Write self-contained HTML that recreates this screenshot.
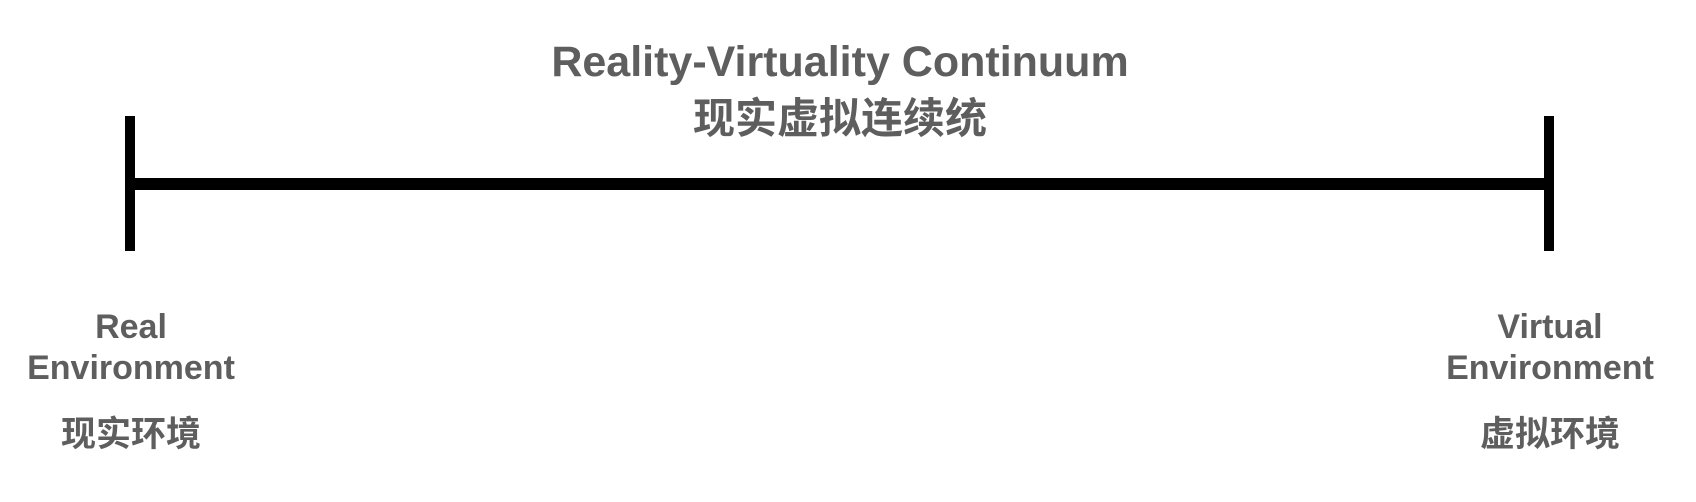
<!DOCTYPE html>
<html><head><meta charset="utf-8"><style>
html,body{margin:0;padding:0;background:#fff;width:1696px;height:502px;overflow:hidden;position:relative}
.t{position:absolute;color:#5e5e5e;font-family:"Liberation Sans","Noto Sans CJK SC",sans-serif;font-weight:bold;text-align:center;white-space:nowrap}
.bar{position:absolute;background:#000}
</style></head><body>
<div class="t" style="left:440px;width:800px;top:35px;font-size:43px;line-height:54px;">Reality-Virtuality Continuum</div>
<div class="t" style="left:440px;width:800px;top:95px;font-size:42px;line-height:48px;">现实虚拟连续统</div>
<div class="bar" style="left:125px;top:116px;width:10px;height:135px"></div>
<div class="bar" style="left:1544px;top:116px;width:10px;height:135px"></div>
<div class="bar" style="left:130px;top:178px;width:1419px;height:12px"></div>
<div class="t" style="left:0;width:262px;top:307px;font-size:34px;line-height:41px;">Real<br>Environment</div>
<div class="t" style="left:0;width:262px;top:414px;font-size:35px;line-height:41px;">现实环境</div>
<div class="t" style="left:1419px;width:262px;top:307px;font-size:34px;line-height:41px;">Virtual<br>Environment</div>
<div class="t" style="left:1419px;width:262px;top:414px;font-size:35px;line-height:41px;">虚拟环境</div>
</body></html>
